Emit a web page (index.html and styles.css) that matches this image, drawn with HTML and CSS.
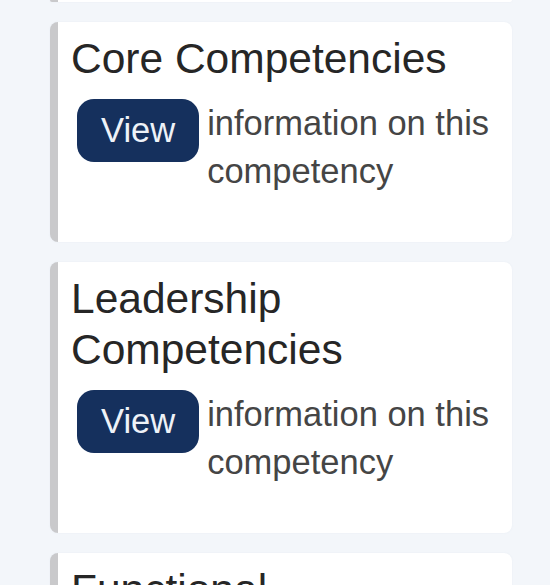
FILE: index.html
```html
<!DOCTYPE html>
<html lang="en">
<head>
<meta charset="utf-8">
<title>Competencies</title>
<link rel="stylesheet" href="styles.css">
</head>
<body>
<div class="list">
  <div class="card card-stub"></div>
  <div class="card">
    <h2 class="card-title">Core Competencies</h2>
    <div class="card-row">
      <a class="btn" href="#">View</a>
      <p class="card-text">information on this competency</p>
    </div>
  </div>
  <div class="card">
    <h2 class="card-title">Leadership Competencies</h2>
    <div class="card-row">
      <a class="btn" href="#">View</a>
      <p class="card-text">information on this competency</p>
    </div>
  </div>
  <div class="card">
    <h2 class="card-title">Functional Competencies</h2>
    <div class="card-row">
      <a class="btn" href="#">View</a>
      <p class="card-text">information on this competency</p>
    </div>
  </div>
</div>
</body>
</html>
```

FILE: styles.css
```css
html, body {
  margin: 0;
  padding: 0;
  background: #f3f6fa;
  font-family: "Liberation Sans", Arial, Helvetica, sans-serif;
  overflow: hidden;
  height: 585px;
}

.list {
  display: flex;
  flex-direction: column;
  gap: 20px;
  padding-left: 50px;
  width: 462px;
}

.card {
  background: #ffffff;
  border-left: 8px solid #c9c9cb;
  border-radius: 8px;
  padding: 11px 12px 47px 13px;
  box-shadow: 0 0 2px rgba(160, 175, 200, 0.12);
}

.card-stub {
  height: 2px;
  padding: 0;
  border-radius: 0 0 8px 8px;
}

.card-title {
  margin: 0;
  font-size: 42.5px;
  line-height: 51px;
  font-weight: 400;
  color: #262626;
}

.card-row {
  display: flex;
  align-items: flex-start;
  gap: 8px;
  margin-top: 15px;
  margin-left: 6px;
}

.btn {
  flex: none;
  display: block;
  background: #15305d;
  color: #eef2f8;
  text-decoration: none;
  font-size: 34.5px;
  line-height: 47px;
  padding: 8px 24px;
  border-radius: 17px;
}

.card-text {
  margin: 0;
  font-size: 34.5px;
  line-height: 48px;
  color: #454545;
}
```
